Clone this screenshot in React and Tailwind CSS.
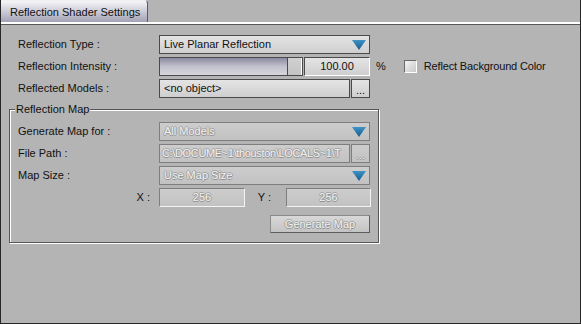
import React from "react";

// dropdown arrow (blue triangle)
function Arrow() {
  return (
    <svg width="14" height="10" viewBox="0 0 14 10" className="shrink-0">
      <defs>
        <linearGradient id="tri" x1="0" y1="0" x2="0" y2="1">
          <stop offset="0" stopColor="#3f93c6" />
          <stop offset="1" stopColor="#155c8c" />
        </linearGradient>
      </defs>
      <polygon points="0,0 14,0 7,10" fill="url(#tri)" />
    </svg>
  );
}

// greyed-out text: white glyph with a grey edge
const dis =
  "text-[#f2f2f2] [text-shadow:1px_0_0_#9a9a9a,-1px_0_0_#a4a4a4,0_1px_0_#8e8e8e,0_-1px_0_#a4a4a4]";

function Combo({ value, disabled }) {
  return (
    <div
      className={
        "w-[211px] h-[19px] flex items-center justify-between pl-[4px] pr-[3px] border bg-gradient-to-b " +
        (disabled
          ? "border-[#7e7e7e] from-[#cdcdcd] to-[#c2c2c2] " + dis
          : "border-[#4a4a4a] from-[#e4e4e4] to-[#cfcfcf] text-[#111]")
      }
    >
      <span>{value}</span>
      <Arrow />
    </div>
  );
}

function Dots({ disabled }) {
  return (
    <div
      className={
        "w-[19px] h-[19px] flex items-end justify-center pb-[3px] border bg-gradient-to-b " +
        (disabled
          ? "border-[#7e7e7e] from-[#cdcdcd] to-[#c2c2c2] " + dis
          : "border-[#4a4a4a] from-[#e4e4e4] to-[#cfcfcf] text-[#111]")
      }
    >
      <span className="leading-[8px]">...</span>
    </div>
  );
}

function Row({ label, children }) {
  return (
    <div className="flex items-center h-[19px]">
      <div className="w-[141px] shrink-0">{label}</div>
      {children}
    </div>
  );
}

export default function App() {
  return (
    <div
      className="w-[581px] h-[324px] bg-[#b4b4b4] border-x border-b border-[#262626] flex flex-col text-[11px] text-[#111] leading-none"
      style={{ fontFamily: '"Liberation Sans", Arial, sans-serif' }}
    >
      {/* Tab strip */}
      <div className="h-[22px] flex shrink-0">
        <div className="w-[147px] h-[22px] rounded-tr-[4px] border-t border-r border-t-[#f0f0f0] border-r-[#5c5c5c] bg-gradient-to-b from-[#f6f6f8] to-[#a2a2b6] flex items-center pl-[9px] pt-[2px]">
          Reflection Shader Settings
        </div>
      </div>
      <div className="h-[2px] bg-white shrink-0" />
      <div className="h-px bg-[#585858] shrink-0" />

      {/* Body */}
      <div className="flex-1 pl-[8px] pt-[10px]">
        <div className="flex flex-col gap-[3px] pl-[9px]">
          <Row label="Reflection Type :">
            <Combo value="Live Planar Reflection" />
          </Row>
          <Row label="Reflection Intensity :">
            <div className="w-[144px] h-[19px] border border-[#4a4a4a] bg-gradient-to-b from-[#8a8aa2] via-[#c2c2ce] to-[#d6d6dc] flex justify-end">
              <div className="w-[15px] h-full border-l border-[#4a4a4a] bg-gradient-to-b from-[#d0d0d0] to-[#c4c4c4] border-r border-r-white" />
            </div>
            <div className="ml-[1px] w-[66px] h-[19px] border border-[#4a4a4a] border-r-white border-b-white bg-gradient-to-b from-[#e4e4e4] to-[#cfcfcf] flex items-center justify-center">
              100.00
            </div>
            <span className="ml-[6px]">%</span>
            <div className="ml-[18px] w-[13px] h-[13px] border border-[#6a6a6a] border-r-white border-b-white bg-gradient-to-br from-[#f4f4f4] to-[#c8c8c8]" />
            <span className="ml-[7px] tracking-[-0.15px]">Reflect Background Color</span>
          </Row>
          <Row label="Reflected Models :">
            <div className="w-[191px] h-[19px] border border-[#4a4a4a] bg-gradient-to-b from-[#e4e4e4] to-[#cfcfcf] flex items-center pl-[4px]">
              &lt;no object&gt;
            </div>
            <div className="ml-[1px]">
              <Dots />
            </div>
          </Row>
        </div>

        {/* Reflection Map group */}
        <div className="relative mt-[11px] w-[370px] h-[134px] border border-[#555] [box-shadow:inset_1px_1px_0_#fff,1px_1px_0_#fff] pl-[8px] pt-[12px]">
          <span className="absolute left-[5px] top-[-6px] bg-[#b4b4b4] px-[1px]">Reflection Map</span>
          <div className="flex flex-col gap-[3px]">
            <Row label="Generate Map for :">
              <Combo value="All Models" disabled />
            </Row>
            <Row label="File Path :">
              <div className={"w-[191px] h-[19px] border border-[#7e7e7e] bg-gradient-to-b from-[#cdcdcd] to-[#c2c2c2] flex items-center pl-[2px] whitespace-nowrap tracking-[-0.35px] " + dis}>
                C:\DOCUME~1\thouston\LOCALS~1\T
              </div>
              <div className="ml-[1px]">
                <Dots disabled />
              </div>
            </Row>
            <Row label="Map Size :">
              <Combo value="Use Map Size" disabled />
            </Row>
            <div className="flex items-center h-[19px]">
              <div className="w-[141px] shrink-0 flex justify-end pr-[9px]">X :</div>
              <div className={"w-[86px] h-[19px] border border-[#7e7e7e] border-r-[#f4f4f4] border-b-[#f4f4f4] bg-gradient-to-b from-[#cdcdcd] to-[#c2c2c2] flex items-center justify-center " + dis}>
                256
              </div>
              <div className="w-[41px] flex justify-center pr-[2px]">Y :</div>
              <div className={"w-[85px] h-[19px] border border-[#7e7e7e] border-r-[#f4f4f4] border-b-[#f4f4f4] bg-gradient-to-b from-[#cdcdcd] to-[#c2c2c2] flex items-center justify-center " + dis}>
                256
              </div>
            </div>
          </div>
          <div className="flex justify-end mt-[8px] pr-[8px]">
            <div className={"w-[100px] h-[18px] border border-[#8a8a8a] border-r-[#5e5e5e] border-b-[#5e5e5e] bg-gradient-to-b from-[#d8d8d8] to-[#c4c4c4] flex items-center justify-center " + dis}>
              Generate Map
            </div>
          </div>
        </div>
      </div>
    </div>
  );
}
